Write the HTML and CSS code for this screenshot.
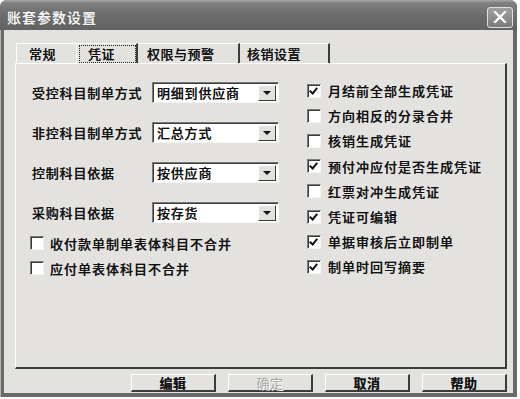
FILE: index.html
```html
<!DOCTYPE html>
<html lang="zh-CN">
<head>
  <meta charset="UTF-8">
  <meta name="viewport" content="width=device-width, initial-scale=1.0">
  <title>账套参数设置</title>
  <link rel="stylesheet" href="styles.css">
</head>
<body>
  <div class="window">
    <div class="titlebar">
      <span class="title">账套参数设置</span>
      <div class="close-btn">
        <svg width="14" height="12" viewBox="0 0 14 12">
          <path d="M2 1 L12 11 M12 1 L2 11" stroke="#fff" stroke-width="2.4" stroke-linecap="square" fill="none"/>
        </svg>
      </div>
    </div>

    <div class="client">
      <div class="tabs">
        <div class="tab tab-general">常规</div>
        <div class="tab tab-voucher active"><span class="focus">凭证</span></div>
        <div class="tab tab-rights">权限与预警</div>
        <div class="tab tab-verify">核销设置</div>
      </div>

      <div class="panel">
        <div class="col-left">
          <div class="field">
            <span class="label">受控科目制单方式</span>
            <div class="combo"><span class="value">明细到供应商</span><span class="arrow"></span></div>
          </div>
          <div class="field">
            <span class="label">非控科目制单方式</span>
            <div class="combo"><span class="value">汇总方式</span><span class="arrow"></span></div>
          </div>
          <div class="field">
            <span class="label">控制科目依据</span>
            <div class="combo"><span class="value">按供应商</span><span class="arrow"></span></div>
          </div>
          <div class="field">
            <span class="label">采购科目依据</span>
            <div class="combo"><span class="value">按存货</span><span class="arrow"></span></div>
          </div>
          <div class="check first"><span class="box"></span>收付款单制单表体科目不合并</div>
          <div class="check"><span class="box"></span>应付单表体科目不合并</div>
        </div>

        <div class="col-right">
          <div class="check"><span class="box checked"></span>月结前全部生成凭证</div>
          <div class="check"><span class="box"></span>方向相反的分录合并</div>
          <div class="check"><span class="box"></span>核销生成凭证</div>
          <div class="check"><span class="box checked"></span>预付冲应付是否生成凭证</div>
          <div class="check"><span class="box"></span>红票对冲生成凭证</div>
          <div class="check"><span class="box checked"></span>凭证可编辑</div>
          <div class="check"><span class="box checked"></span>单据审核后立即制单</div>
          <div class="check"><span class="box checked"></span>制单时回写摘要</div>
        </div>
      </div>

      <div class="buttons">
        <div class="btn">编辑</div>
        <div class="btn disabled">确定</div>
        <div class="btn">取消</div>
        <div class="btn">帮助</div>
      </div>
    </div>
  </div>
</body>
</html>
```

FILE: styles.css
```css
body {
  margin: 0;
  background-color: #ffffff;
  font-family: "Noto Sans CJK SC", "Liberation Sans", sans-serif;
  font-size: 13px;
  font-weight: 500;
  color: #111111;
  text-shadow: 0 0 0.6px rgba(0, 0, 0, 0.7);
}

.window {
  width: 517px;
  height: 397px;
  box-sizing: border-box;
  background-color: #6a6a6a;
  border-radius: 7px 7px 0 0;
  padding: 0 4px 4px 4px;
  display: flex;
  flex-direction: column;
  box-shadow: inset 1px 0 0 #b4b4b4;
}

.titlebar {
  height: 30px;
  margin: 0 -4px;
  padding: 0 4px 0 7px;
  display: flex;
  align-items: center;
  justify-content: space-between;
  border-radius: 7px 7px 0 0;
  background: linear-gradient(to bottom, #a8a8a8 0, #808080 3px, #6e6e6e 45%, #626262 100%);
}

.title {
  color: #f4f4f4;
  font-weight: bold;
  font-size: 14px;
  letter-spacing: 1px;
  margin-top: 4px;
  text-shadow: 0 0 1px #3a3a3a;
}

.close-btn {
  width: 24px;
  height: 19px;
  margin-top: 4px;
  border: 1px solid #e0e0e0;
  border-radius: 3px;
  background: linear-gradient(to bottom, #a0a0a0, #7a7a7a);
  display: flex;
  align-items: center;
  justify-content: center;
}

.client {
  flex: 1;
  background-color: #e3e2df;
  padding: 13px 7px 0 11px;
  display: flex;
  flex-direction: column;
}

/* tabs */
.tabs {
  display: flex;
  height: 20px;
  padding-left: 1px;
}

.tab {
  box-sizing: border-box;
  height: 20px;
  border-top: 1px solid #ffffff;
  border-left: 1px solid #ffffff;
  border-right: 2px solid #3c3c3c;
  display: flex;
  align-items: center;
  padding-left: 10px;
  letter-spacing: 0.5px;
}

.tab-general { width: 60px; border-right: none; padding-left: 12px; }
.tab-voucher { width: 62px; padding-left: 2px; }
.tab-rights { width: 102px; padding-left: 9px; border-left: none; }
.tab-verify { width: 90px; padding-left: 7px; border-left: none; }

.tab .focus {
  flex: 1;
  height: 16px;
  border: 1px dotted #202020;
  display: flex;
  align-items: center;
  padding-left: 8px;
}

/* panel */
.panel {
  box-sizing: border-box;
  width: 492px;
  height: 306px;
  border-top: 1px solid #ffffff;
  border-left: 1px solid #ffffff;
  border-right: 2px solid #3c3c3c;
  border-bottom: 2px solid #3c3c3c;
  padding: 18px 0 0 16px;
  display: grid;
  grid-template-columns: 275px 1fr;
  align-items: start;
}

.col-left,
.col-right {
  display: flex;
  flex-direction: column;
}

.field {
  height: 21px;
  display: flex;
  align-items: center;
  margin-bottom: 19px;
}

.field:nth-child(4) {
  margin-bottom: 0;
}

.label {
  width: 120px;
  letter-spacing: 0.8px;
}

.combo {
  box-sizing: border-box;
  width: 127px;
  height: 21px;
  background-color: #ffffff;
  border-top: 1px solid #7a7a7a;
  border-left: 1px solid #7a7a7a;
  border-right: 1px solid #f4f4f4;
  border-bottom: 1px solid #f4f4f4;
  box-shadow: inset 1px 1px 0 #3a3a3a;
  display: flex;
  align-items: center;
  justify-content: space-between;
  padding: 0 2px 0 4px;
}

.value {
  letter-spacing: 0.8px;
}

.arrow {
  box-sizing: border-box;
  width: 18px;
  height: 16px;
  background-color: #e3e2df;
  border-top: 1px solid #ffffff;
  border-left: 1px solid #ffffff;
  border-right: 1px solid #3a3a3a;
  border-bottom: 1px solid #3a3a3a;
  position: relative;
}

.arrow::after {
  content: '';
  position: absolute;
  left: 4px;
  top: 5px;
  border-left: 4px solid transparent;
  border-right: 4px solid transparent;
  border-top: 4px solid #111111;
}

.check {
  height: 25.2px;
  display: flex;
  align-items: center;
  letter-spacing: 1px;
}

.col-left .check {
  margin-left: -2px;
}

.col-left .check.first {
  margin-top: 7.5px;
}

.col-right {
  margin-top: -4px;
}

.box {
  box-sizing: border-box;
  width: 14px;
  height: 14px;
  margin-right: 6px;
  background-color: #ffffff;
  border-top: 1px solid #7a7a7a;
  border-left: 1px solid #7a7a7a;
  border-right: 1px solid #f4f4f4;
  border-bottom: 1px solid #f4f4f4;
  box-shadow: inset 1px 1px 0 #3a3a3a;
  position: relative;
}

.col-right .box {
  margin-right: 7px;
}

.box.checked::after {
  content: '';
  position: absolute;
  left: 3px;
  top: 1px;
  width: 3px;
  height: 6px;
  border-right: 2px solid #111111;
  border-bottom: 2px solid #111111;
  transform: rotate(40deg);
}

/* buttons */
.buttons {
  display: flex;
  justify-content: flex-end;
  gap: 12px;
  margin-top: 5px;
  width: 492px;
}

.btn {
  box-sizing: border-box;
  width: 85px;
  height: 18px;
  border-top: 1px solid #ffffff;
  border-left: 1px solid #ffffff;
  border-right: 2px solid #3c3c3c;
  border-bottom: 2px solid #3c3c3c;
  display: flex;
  align-items: center;
  justify-content: center;
  letter-spacing: 0.5px;
  font-weight: bold;
}

.btn.disabled {
  color: #a6a6a6;
  font-weight: normal;
  text-shadow: 1px 1px 0 #ffffff;
}
```
